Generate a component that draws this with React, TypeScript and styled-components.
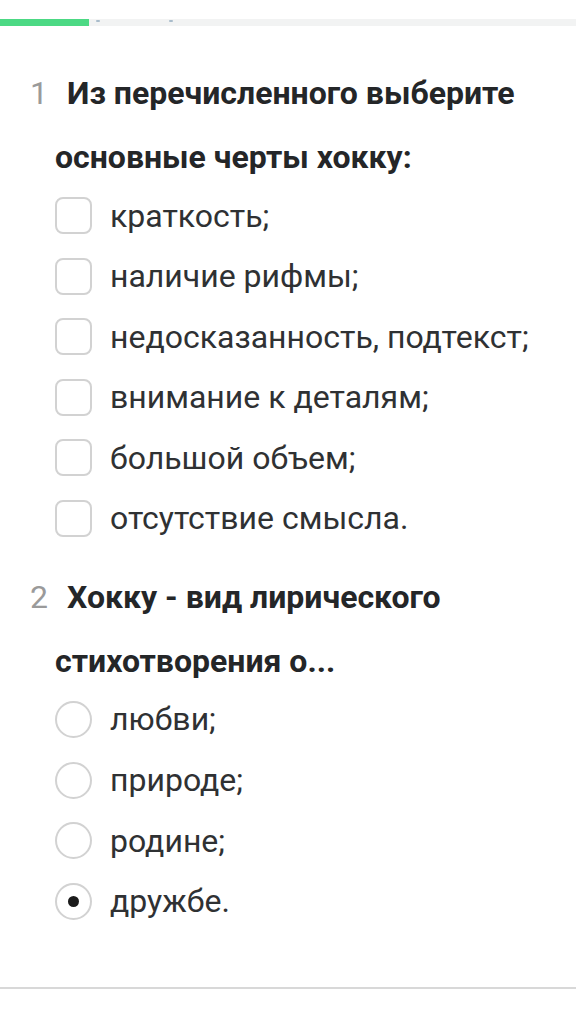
import React from "react";
import styled, { createGlobalStyle } from "styled-components";

const GlobalStyle = createGlobalStyle`
  html, body {
    margin: 0;
    padding: 0;
    background: #fff;
    font-family: Roboto, "Noto Sans", sans-serif;
  }
`;

const Page = styled.div`
  width: 576px;
  min-height: 1020px;
  background: #fff;
  padding-top: 19px;
  box-sizing: border-box;
`;

const Progress = styled.div`
  position: relative;
  height: 7px;
  background: #f2f3f3;
`;

const ProgressFill = styled.div`
  height: 100%;
  background: #4cd984;
`;

const Tick = styled.span<{ $left: number }>`
  position: absolute;
  top: 1px;
  left: ${(p) => p.$left}px;
  width: 4px;
  height: 2px;
  border-radius: 1px;
  background: #a9bccb;
`;

const Question = styled.section`
  padding: 0 10px 0 55px;
  margin-top: 35px;

  & + & {
    margin-top: 28px;
  }
`;

const Title = styled.h2`
  margin: 0;
  font-size: 32px;
  line-height: 64px;
  font-weight: 700;
  color: #242628;
  text-indent: -25px;
`;

const Num = styled.span`
  display: inline-block;
  width: 37px;
  text-indent: 0;
  font-weight: 400;
  color: #9a9a9a;
`;

const Options = styled.ul`
  list-style: none;
  margin: 8px 0 0;
  padding: 0;
  display: flex;
  flex-direction: column;
  gap: 23.6px;
`;

const Option = styled.li`
  display: flex;
  align-items: center;
  gap: 18px;
  font-size: 32px;
  color: #2f3133;
  height: 37px;
  white-space: nowrap;
`;

const Box = styled.span<{ $round?: boolean }>`
  flex: none;
  width: 37px;
  height: 37px;
  box-sizing: border-box;
  border: 2px solid #d2d2d2;
  border-radius: ${(p) => (p.$round ? "50%" : "8px")};
  display: flex;
  align-items: center;
  justify-content: center;
`;

const Dot = styled.span`
  width: 11px;
  height: 11px;
  border-radius: 50%;
  background: #1b1b1b;
`;

const Divider = styled.hr`
  margin: 67px 0 0;
  border: none;
  height: 2px;
  background: #d8d8d8;
`;

const q1 = [
  "краткость;",
  "наличие рифмы;",
  "недосказанность, подтекст;",
  "внимание к деталям;",
  "большой объем;",
  "отсутствие смысла.",
];

const q2 = ["любви;", "природе;", "родине;", "дружбе."];

export default function App() {
  return (
    <Page>
      <GlobalStyle />
      <Progress>
        <ProgressFill style={{ width: 89 }} />
        <Tick $left={96} />
        <Tick $left={169} />
      </Progress>

      <Question>
        <Title>
          <Num>1</Num>Из перечисленного выберите основные черты хокку:
        </Title>
        <Options>
          {q1.map((t) => (
            <Option key={t}>
              <Box />
              {t}
            </Option>
          ))}
        </Options>
      </Question>

      <Question>
        <Title>
          <Num>2</Num>Хокку - вид лирического стихотворения о...
        </Title>
        <Options>
          {q2.map((t, i) => (
            <Option key={t}>
              <Box $round>{i === 3 && <Dot />}</Box>
              {t}
            </Option>
          ))}
        </Options>
      </Question>

      <Divider />
    </Page>
  );
}
